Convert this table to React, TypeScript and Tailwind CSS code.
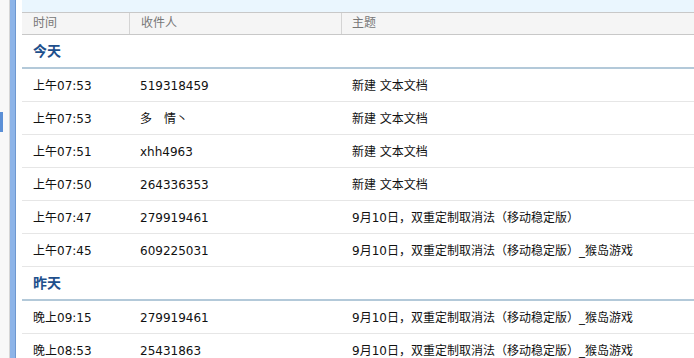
const groups = [
  {
    title: '今天',
    rows: [
      ['上午07:53', '519318459', '新建 文本文档'],
      ['上午07:53', '多　情丶', '新建 文本文档'],
      ['上午07:51', 'xhh4963', '新建 文本文档'],
      ['上午07:50', '264336353', '新建 文本文档'],
      ['上午07:47', '279919461', '9月10日，双重定制取消法（移动稳定版）'],
      ['上午07:45', '609225031', '9月10日，双重定制取消法（移动稳定版）_猴岛游戏'],
    ],
  },
  {
    title: '昨天',
    rows: [
      ['晚上09:15', '279919461', '9月10日，双重定制取消法（移动稳定版）_猴岛游戏'],
      ['晚上08:53', '25431863', '9月10日，双重定制取消法（移动稳定版）_猴岛游戏'],
    ],
  },
]

const font = { fontFamily: '"DejaVu Sans", "Noto Sans CJK SC", sans-serif' }

export default function App() {
  return (
    <div className="flex w-[694px] h-[358px] overflow-hidden bg-white text-[12px] text-[#111]" style={font}>
      {/* Left rail */}
      <div className="w-[9px] shrink-0 bg-[#f8f8f8] flex flex-col">
        <div className="h-[112px]" />
        <div className="w-[3px] h-[20px] bg-[#5b8fd6]" />
      </div>
      <div className="w-px shrink-0 bg-[#d6d6d6]" />
      <div className="w-[5px] shrink-0 bg-[#8db4e8]" />
      <div className="w-px shrink-0 bg-[#6f98cf]" />

      {/* Main list */}
      <div className="flex-1 min-w-0 pl-[6px]">
        <div className="w-[700px]">
          <div className="h-[13px] bg-[#eaf6fe] border-b border-[#c8c8c8]" />
          <div className="flex h-[22px] bg-[#f5f5f5] border-b border-[#c8c8c8] text-[#777] leading-[21px]">
            <div className="w-[107px] pl-[11px]">时间</div>
            <div className="w-[212px] pl-[11px] border-l border-[#d4d4d4]">收件人</div>
            <div className="flex-1 pl-[10px] border-l border-[#d4d4d4]">主题</div>
          </div>

          {groups.map((g) => (
            <div key={g.title}>
              <div className="h-[34px] flex items-center pl-[11px] pt-[1px] border-b-2 border-[#b3c9d9] text-[14px] font-bold text-[#1e4f8c]">
                {g.title}
              </div>
              {g.rows.map((r, i) => (
                <div key={i} className="flex h-[33px] items-center pt-[1px] border-b border-[#e6e6e6]">
                  <div className="w-[107px] pl-[11px]">{r[0]}</div>
                  <div className="w-[212px] pl-[11px]">{r[1]}</div>
                  <div className="flex-1 pl-[11px] whitespace-nowrap">{r[2]}</div>
                </div>
              ))}
            </div>
          ))}
        </div>
      </div>
    </div>
  )
}
